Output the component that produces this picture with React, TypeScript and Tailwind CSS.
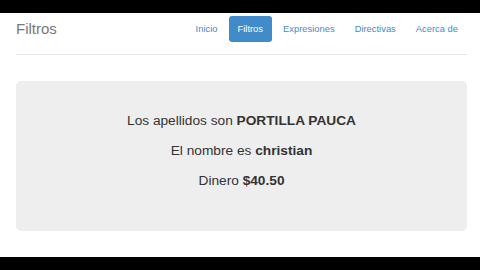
import React from "react"

const links = ["Inicio", "Filtros", "Expresiones", "Directivas", "Acerca de"]

const NavBar = () => {
  return (
    <header className="ml-4 mr-[13px] flex h-[42px] items-start justify-between border-b border-[#e5e5e5] pt-[3px]">
      <span className="text-[15px] leading-[26px] text-[#777777]">Filtros</span>
      <nav className="flex gap-[2px]">
        {links.map((label) => (
          <a
            key={label}
            className={
              label === "Filtros"
                ? "rounded-[3px] bg-[#428bca] px-[9px] text-[9.4px] leading-[26px] text-white"
                : "px-[9px] text-[9.4px] leading-[26px] text-[#428bca]"
            }
          >
            {label}
          </a>
        ))}
      </nav>
    </header>
  )
}

export default function App() {
  return (
    <div
      className="flex h-[270px] w-[480px] flex-col bg-black"
      style={{ fontFamily: '"Liberation Sans", Arial, sans-serif' }}
    >
      <div className="h-[13px]" />
      <main className="h-[244px] bg-white">
        <NavBar />
        <section className="ml-4 mr-[13px] mt-[26px] h-[150px] rounded-[5px] bg-[#eeeeee] pt-[25px] text-center text-[13.7px] leading-[30px] text-[#333333]">
          <p>
            Los apellidos son <b>PORTILLA PAUCA</b>
          </p>
          <p>
            El nombre es <b>christian</b>
          </p>
          <p>
            Dinero <b>$40.50</b>
          </p>
        </section>
      </main>
    </div>
  )
}
